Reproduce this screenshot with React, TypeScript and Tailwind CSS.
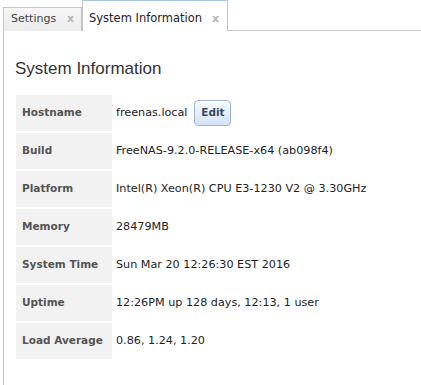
import React from "react";

const rows: { label: string; value: string; edit?: boolean }[] = [
  { label: "Hostname", value: "freenas.local", edit: true },
  { label: "Build", value: "FreeNAS-9.2.0-RELEASE-x64 (ab098f4)" },
  { label: "Platform", value: "Intel(R) Xeon(R) CPU E3-1230 V2 @ 3.30GHz" },
  { label: "Memory", value: "28479MB" },
  { label: "System Time", value: "Sun Mar 20 12:26:30 EST 2016" },
  { label: "Uptime", value: "12:26PM up 128 days, 12:13, 1 user" },
  { label: "Load Average", value: "0.86, 1.24, 1.20" },
];

export default function App() {
  return (
    <div className="h-[385px] w-[421px] overflow-hidden bg-white font-['DejaVu_Sans',Verdana,sans-serif] text-[11px] text-[#333]">
      {/* tab strip */}
      <div className="flex h-[31px] items-end pl-[3px]">
        <div className="flex h-[24px] w-[79px] items-center justify-between border border-b-0 border-[#c5c5c5] bg-gradient-to-b from-[#f7f7f7] to-[#ececec] pl-[7px] pr-[7px] text-[11px] text-[#444]">
          <span>Settings</span>
          <span className="text-[11px] font-bold text-[#b5b5b5]">x</span>
        </div>
        <div className="flex h-[31px] w-[146px] items-center justify-between border border-b-0 border-[#c5c5c5] border-t-[#a9c4e6] bg-white pl-[6px] pr-[8px] pt-[6px] text-[11.5px] text-[#222]">
          <span>System Information</span>
          <span className="text-[11px] font-bold text-[#b5b5b5]">x</span>
        </div>
        <div className="h-full flex-1 border-b border-[#c5c5c5]" />
      </div>

      {/* content */}
      <div className="ml-[3px] h-[354px] border-l border-[#c5c5c5] pl-[11px] pt-[27px]">
        <h1 className="font-['Liberation_Sans',Arial,sans-serif] text-[17px] leading-[22px] text-[#333]">
          System Information
        </h1>
        <div className="mt-[15px] flex flex-col gap-[2px] pl-[1px]">
          {rows.map((r) => (
            <div key={r.label} className="flex h-[36px] items-center">
              <div className="flex h-full w-[96px] items-center bg-[#f2f2f2] pl-[6px] text-[10.5px] font-bold text-[#555]">
                {r.label}
              </div>
              <div className="flex items-center pl-[4px] text-[11.2px] text-[#222]">
                <span>{r.value}</span>
                {r.edit && (
                  <button className="ml-[7px] h-[26px] w-[37px] rounded-[4px] border border-[#9fb4cf] bg-gradient-to-b from-[#f8fbff] to-[#d3e3f5] text-[10.5px] font-bold text-[#3b4a5e] shadow-[inset_0_1px_0_#fff]">
                    Edit
                  </button>
                )}
              </div>
            </div>
          ))}
        </div>
      </div>
    </div>
  );
}
